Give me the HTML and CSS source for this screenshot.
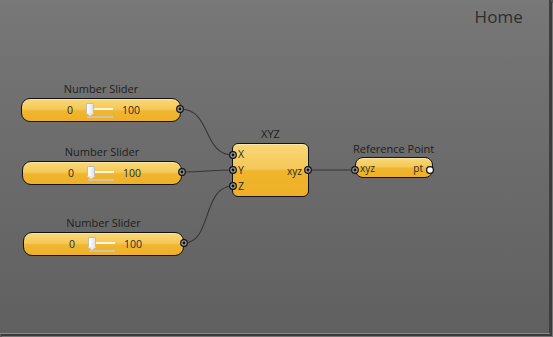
FILE: index.html
```html
<!DOCTYPE html>
<html>
<head>
<meta charset="utf-8">
<link rel="stylesheet" href="styles.css">
</head>
<body>
<div class="frame">
  <div class="canvas">
    <div class="title">Home</div>

    <div class="node slider-node s1">
      <div class="label">Number Slider</div>
      <div class="pill">
        <span class="min">0</span>
        <span class="track"><span class="thumb"></span></span>
        <span class="max">100</span>
      </div>
    </div>
    <div class="node slider-node s2">
      <div class="label">Number Slider</div>
      <div class="pill">
        <span class="min">0</span>
        <span class="track"><span class="thumb"></span></span>
        <span class="max">100</span>
      </div>
    </div>
    <div class="node slider-node s3">
      <div class="label">Number Slider</div>
      <div class="pill">
        <span class="min">0</span>
        <span class="track"><span class="thumb"></span></span>
        <span class="max">100</span>
      </div>
    </div>

    <div class="node xyz">
      <div class="label">XYZ</div>
      <div class="box">
        <div class="inputs"><span>X</span><span>Y</span><span>Z</span></div>
        <div class="outputs"><span>xyz</span></div>
      </div>
    </div>

    <div class="node ref">
      <div class="label">Reference Point</div>
      <div class="pill ref-pill">
        <span>xyz</span>
        <span>pt</span>
      </div>
    </div>

    <svg class="wires" width="553" height="337" viewBox="0 0 553 337">
      <g fill="none" stroke="#363636" stroke-width="1.1">
        <path d="M180,109 C212,109 202,155 233,155"/>
        <path d="M182,172 C205,172 210,170 233,170"/>
        <path d="M184,243 C212,243 202,186 233,186"/>
        <path d="M308,170 L355,170"/>
      </g>
      <g class="port">
        <circle cx="180" cy="109" r="3.3"/>
        <circle cx="182" cy="172" r="3.3"/>
        <circle cx="184" cy="243" r="3.3"/>
        <circle cx="233" cy="155" r="3.3"/>
        <circle cx="233" cy="170" r="3.3"/>
        <circle cx="233" cy="186" r="3.3"/>
        <circle cx="308" cy="170" r="3.3"/>
        <circle cx="355" cy="170" r="3.3"/>
      </g>
      <g fill="#111">
        <circle cx="180" cy="109" r="1.4"/>
        <circle cx="182" cy="172" r="1.4"/>
        <circle cx="184" cy="243" r="1.4"/>
        <circle cx="233" cy="155" r="1.4"/>
        <circle cx="233" cy="170" r="1.4"/>
        <circle cx="233" cy="186" r="1.4"/>
        <circle cx="308" cy="170" r="1.4"/>
        <circle cx="355" cy="170" r="1.4"/>
      </g>
      <circle cx="430" cy="170" r="3.4" fill="#fff" stroke="#111" stroke-width="1.3"/>
    </svg>
  </div>
</div>
</body>
</html>
```

FILE: styles.css
```css
html, body {
  margin: 0;
  padding: 0;
  background: #5a5a5a;
}
body {
  width: 553px;
  height: 337px;
  overflow: hidden;
  font-family: "Open Sans", "Noto Sans", sans-serif;
}
.frame {
  width: 549px;
  height: 333px;
  border-right: 2px solid #3e3e3e;
  border-bottom: 1px solid #8a8a8a;
  box-shadow: 1px 2px 0 #3a3a3a, 2px 3px 0 #777;
}
.canvas {
  position: relative;
  width: 549px;
  height: 333px;
  background: linear-gradient(#787878, #727272 20%, #6a6a6a 55%, #606060);
}
.title {
  position: absolute;
  right: 26px;
  top: 5px;
  font-size: 17px;
  color: #2e2e2e;
  letter-spacing: 0.1px;
}
.node {
  position: absolute;
  display: flex;
  flex-direction: column;
  align-items: center;
}
.label {
  font-size: 11px;
  color: #1e1e1e;
  line-height: 14px;
  margin-bottom: 2px;
  white-space: nowrap;
}
.pill {
  box-sizing: border-box;
  border: 1.5px solid #141414;
  border-radius: 9px;
  background: linear-gradient(#f9d878 0%, #f5c957 45%, #f0b630 55%, #eeb027 100%);
  box-shadow: inset 0 1px 0 rgba(255,255,255,0.35);
  display: flex;
  align-items: center;
  font-size: 10.5px;
  color: #2a2a2a;
}
.slider-node .pill {
  width: 160px;
  height: 24px;
  padding-left: 45px;
}
.s1 { left: 21px; top: 82px; }
.s2 { left: 22px; top: 145px; }
.s3 { left: 23px; top: 216px; }
.s3 .pill { width: 161px; }
.min { width: 19px; }
.track {
  position: relative;
  width: 27px;
  height: 16px;
  margin-right: 9px;
}
.track::before {
  content: "";
  position: absolute;
  left: 4px;
  right: 0;
  top: 6px;
  height: 2px;
  background: #fbf3dc;
}
.track::after {
  content: "";
  position: absolute;
  left: 1px;
  right: 0;
  top: 14px;
  height: 1.5px;
  background: rgba(200,200,200,0.8);
}
.thumb {
  position: absolute;
  left: 0;
  top: 1px;
  width: 6px;
  height: 9px;
  background: linear-gradient(90deg, #ffffff, #e4e4e4);
  border: 1px solid #bdbdbd;
  border-radius: 1px 1px 0 0;
  z-index: 1;
}
.thumb::after {
  content: "";
  position: absolute;
  left: -1px;
  top: 9px;
  border-left: 4px solid transparent;
  border-right: 4px solid transparent;
  border-top: 3px solid #e8e8e8;
}

.xyz { left: 232px; top: 127px; }
.xyz .label { font-size: 11px; margin-bottom: 2px; }
.box {
  box-sizing: border-box;
  width: 77px;
  height: 54px;
  border: 1.5px solid #141414;
  border-radius: 6px;
  background: linear-gradient(#f9d878 0%, #f4c758 48%, #f0b52d 52%, #eeb027 100%);
  box-shadow: inset 0 1px 0 rgba(255,255,255,0.35);
  display: flex;
  justify-content: space-between;
  align-items: center;
  font-size: 10px;
  color: #2a2a2a;
}
.inputs {
  display: flex;
  flex-direction: column;
  gap: 1px;
  padding-left: 5px;
  line-height: 15px;
  font-size: 10.5px;
}
.outputs {
  padding-right: 6px;
  font-size: 10px;
  padding-top: 1px;
}
.ref { left: 355px; top: 142px; align-items: flex-start; }
.ref .label { font-size: 11px; margin-bottom: 1px; margin-left: -2px; }
.ref-pill {
  width: 78px;
  height: 21px;
  border-radius: 8px;
  justify-content: space-between;
  padding: 0 9px 0 4px;
  font-size: 10px;
}
.wires {
  position: absolute;
  left: 0;
  top: 0;
  pointer-events: none;
}
.port circle {
  fill: #9a9a9a;
  stroke: #111;
  stroke-width: 1.2;
}
```
